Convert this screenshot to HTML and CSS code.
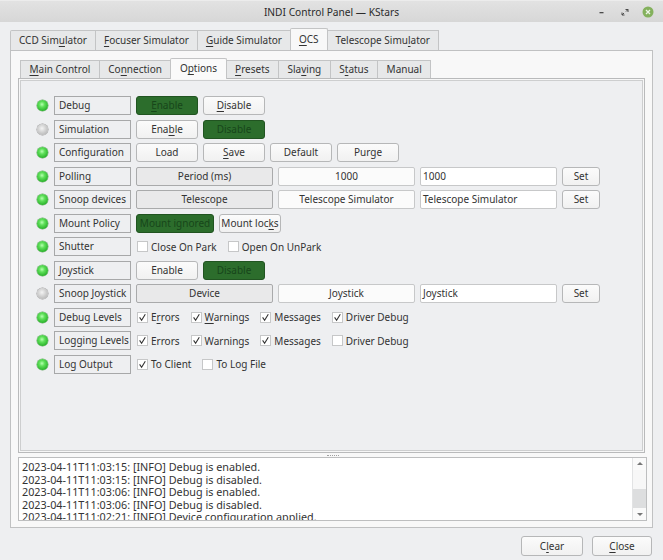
FILE: index.html
```html
<!DOCTYPE html>
<html>
<head>
<meta charset="utf-8">
<title>INDI Control Panel — KStars</title>
<link rel="stylesheet" href="styles.css">
</head>
<body>
<div class="titlebar">
  <div class="title">INDI Control Panel — KStars</div>
  <div class="wctl">
    <svg class="wmin" width="8" height="8" viewBox="0 0 8 8"><rect x="1.5" y="4" width="4" height="1.3" fill="#4a4a4a"/></svg>
    <svg class="wmax" width="8" height="8" viewBox="0 0 8 8"><path d="M4.5 1.5H7V4M7 1.5L5 3.5M3.5 7H1V4.5M1 7L3 5" stroke="#4a4a4a" stroke-width="1" fill="none"/></svg>
    <svg class="wclose" width="12" height="12" viewBox="0 0 12 12"><circle cx="6" cy="6" r="5.5" fill="#84b15d"/><path d="M4 4L8 8M8 4L4 8" stroke="#eef5e8" stroke-width="1.3"/></svg>
  </div>
</div>

<div class="content">
  <div class="tabbar outer-tabs">
    <div class="tab">CCD Sim<u>u</u>lator</div>
    <div class="tab"><u>F</u>ocuser Simulator</div>
    <div class="tab"><u>G</u>uide Simulator</div>
    <div class="tab sel"><u>O</u>CS</div>
    <div class="tab">Telescope Simu<u>l</u>ator</div>
  </div>
  <div class="outer-pane">
    <div class="tabbar inner-tabs">
      <div class="tab"><u>M</u>ain Control</div>
      <div class="tab">Co<u>n</u>nection</div>
      <div class="tab sel">O<u>p</u>tions</div>
      <div class="tab"><u>P</u>resets</div>
      <div class="tab">Sla<u>v</u>ing</div>
      <div class="tab">S<u>t</u>atus</div>
      <div class="tab">Manual</div>
    </div>
    <div class="inner-pane">
      <div class="rows">
        <div class="row">
          <span class="led on"></span><span class="plabel">Debug</span>
          <div class="ctrls"><span class="btn green"><u>E</u>nable</span><span class="btn"><u>D</u>isable</span></div>
        </div>
        <div class="row">
          <span class="led off"></span><span class="plabel">Simulation</span>
          <div class="ctrls"><span class="btn">Ena<u>b</u>le</span><span class="btn green">Disable</span></div>
        </div>
        <div class="row">
          <span class="led on"></span><span class="plabel">Configuration</span>
          <div class="ctrls"><span class="btn">Load</span><span class="btn"><u>S</u>ave</span><span class="btn">Default</span><span class="btn">Purge</span></div>
        </div>
        <div class="row">
          <span class="led on"></span><span class="plabel">Polling</span>
          <div class="ctrls"><span class="ro">Period (ms)</span><span class="val">1000</span><span class="input">1000</span><span class="btn set">Set</span></div>
        </div>
        <div class="row">
          <span class="led on"></span><span class="plabel">Snoop devices</span>
          <div class="ctrls"><span class="ro">Telescope</span><span class="val">Telescope Simulator</span><span class="input">Telescope Simulator</span><span class="btn set">Set</span></div>
        </div>
        <div class="row">
          <span class="led on"></span><span class="plabel">Mount Policy</span>
          <div class="ctrls"><span class="btn green wide">Mount ignored</span><span class="btn">Mount loc<u>k</u>s</span></div>
        </div>
        <div class="row">
          <span class="led on"></span><span class="plabel">Shutter</span>
          <div class="ctrls checks">
            <span class="chk"><span class="box"></span><span class="ct">Close On Park</span></span>
            <span class="chk"><span class="box"></span><span class="ct">Open On UnPark</span></span>
          </div>
        </div>
        <div class="row">
          <span class="led on"></span><span class="plabel">Joystick</span>
          <div class="ctrls"><span class="btn">Enable</span><span class="btn green">Disable</span></div>
        </div>
        <div class="row">
          <span class="led off"></span><span class="plabel">Snoop Joystick</span>
          <div class="ctrls"><span class="ro">Device</span><span class="val">Joystick</span><span class="input">Joystick</span><span class="btn set">Set</span></div>
        </div>
        <div class="row">
          <span class="led on"></span><span class="plabel">Debug Levels</span>
          <div class="ctrls checks">
            <span class="chk"><span class="box"><svg viewBox="0 0 11 11"><path d="M2.6 5.4L4.6 8.3L8.3 2.2"/></svg></span><span class="ct">E<u>r</u>rors</span></span>
            <span class="chk"><span class="box"><svg viewBox="0 0 11 11"><path d="M2.6 5.4L4.6 8.3L8.3 2.2"/></svg></span><span class="ct"><u>W</u>arnings</span></span>
            <span class="chk"><span class="box"><svg viewBox="0 0 11 11"><path d="M2.6 5.4L4.6 8.3L8.3 2.2"/></svg></span><span class="ct">Messages</span></span>
            <span class="chk"><span class="box"><svg viewBox="0 0 11 11"><path d="M2.6 5.4L4.6 8.3L8.3 2.2"/></svg></span><span class="ct">Driver Debug</span></span>
          </div>
        </div>
        <div class="row">
          <span class="led on"></span><span class="plabel">Logging Levels</span>
          <div class="ctrls checks">
            <span class="chk"><span class="box"><svg viewBox="0 0 11 11"><path d="M2.6 5.4L4.6 8.3L8.3 2.2"/></svg></span><span class="ct">Errors</span></span>
            <span class="chk"><span class="box"><svg viewBox="0 0 11 11"><path d="M2.6 5.4L4.6 8.3L8.3 2.2"/></svg></span><span class="ct">Warnings</span></span>
            <span class="chk"><span class="box"><svg viewBox="0 0 11 11"><path d="M2.6 5.4L4.6 8.3L8.3 2.2"/></svg></span><span class="ct">Messages</span></span>
            <span class="chk"><span class="box"></span><span class="ct">Driver Debug</span></span>
          </div>
        </div>
        <div class="row">
          <span class="led on"></span><span class="plabel">Log Output</span>
          <div class="ctrls checks">
            <span class="chk"><span class="box"><svg viewBox="0 0 11 11"><path d="M2.6 5.4L4.6 8.3L8.3 2.2"/></svg></span><span class="ct">To Client</span></span>
            <span class="chk"><span class="box"></span><span class="ct">To Log File</span></span>
          </div>
        </div>
      </div>
    </div>
    <div class="splitter"><span class="grip"></span></div>
    <div class="log">
      <div class="log-text">
        <div class="line">2023-04-11T11:03:15: [INFO] Debug is enabled.</div>
        <div class="line">2023-04-11T11:03:15: [INFO] Debug is disabled.</div>
        <div class="line">2023-04-11T11:03:06: [INFO] Debug is enabled.</div>
        <div class="line">2023-04-11T11:03:06: [INFO] Debug is disabled.</div>
        <div class="line">2023-04-11T11:02:21: [INFO] Device configuration applied.</div>
      </div>
      <div class="vscroll">
        <span class="arrow up"></span>
        <span class="track"><span class="thumb"></span></span>
        <span class="arrow down"></span>
      </div>
    </div>
  </div>
  <div class="footer">
    <span class="btn fbtn">C<u>l</u>ear</span>
    <span class="btn fbtn close"><u>C</u>lose</span>
  </div>
</div>
</body>
</html>
```

FILE: styles.css
```css
* { box-sizing: border-box; }
html, body { margin: 0; padding: 0; }
body {
  width: 663px;
  height: 560px;
  overflow: hidden;
  background: #eeeff1;
  font-family: "Noto Sans", "DejaVu Sans", sans-serif;
  font-size: 10px;
  color: #333;
}
u { text-decoration-thickness: 1px; text-underline-offset: 1.5px; }

/* title bar */
.titlebar {
  height: 22px;
  display: grid;
  grid-template-columns: 1fr auto 1fr;
  align-items: center;
  background: linear-gradient(#e2e2e2, #d7d7d7);
  border-top: 1px solid #ececec;
}
.title { grid-column: 2; color: #2b2b2b; font-size: 10.2px; }
.wctl {
  grid-column: 3;
  justify-self: end;
  display: flex;
  align-items: center;
  padding-right: 9px;
}
.wctl svg { display: block; }
.wmin { margin-right: 15px; }
.wmax { margin-right: 13px; }

/* content */
.content { padding: 6px 10px 0 10px; }

.tabbar { display: flex; align-items: flex-end; }
.tab {
  height: 20px;
  line-height: 19px;
  padding: 0 8px;
  background: #e7e8e9;
  border: 1px solid #c3c4c5;
  border-bottom: none;
  margin-right: -1px;
  color: #333;
  white-space: nowrap;
}
.tab.sel {
  height: 22px;
  line-height: 20px;
  background: #f8f8f8;
  position: relative;
  z-index: 1;
  border-radius: 2px 2px 0 0;
}
.outer-tabs { height: 22px; }
.outer-tabs .tab:first-child { border-radius: 2px 0 0 0; }

.outer-pane {
  height: 478px;
  background: #f8f8f8;
  border: 1px solid #c0c1c2;
  padding: 7px 5px 6px 7px;
  display: flex;
  flex-direction: column;
}
.inner-tabs { height: 20px; margin-left: 2px; }
.inner-tabs .tab { height: 18px; line-height: 17px; padding: 0 8.5px; }
.inner-tabs .tab.sel { height: 21px; line-height: 19px; margin-bottom: -1px; background: #fafafa; }

.inner-pane {
  height: 375px;
  margin-right: 2px;
  background: #eeeff1;
  border: 1px solid #b9babb;
  box-shadow: inset 0 0 0 1px #f7f7f7, inset 0 0 0 2px #cdcecf;
  padding: 17px 0 0 18px;
}
.rows { display: flex; flex-direction: column; gap: 4.5px; }
.row { display: flex; align-items: center; height: 19px; }

.led {
  width: 11px;
  height: 11px;
  border-radius: 50%;
  margin-right: 6px;
  flex: none;
}
.led.on {
  background: radial-gradient(circle at 45% 40%, #b6ffb0 0, #5fe05a 30%, #2fb52f 70%, #1f8f22 100%);
  box-shadow: 0 0 0 0.5px #6aa86a;
}
.led.off {
  background: radial-gradient(circle at 45% 40%, #f4f4f4 0, #d0d0d0 45%, #a9a9a9 100%);
  box-shadow: 0 0 0 0.5px #9a9a9a;
}
.plabel {
  width: 77px;
  height: 19px;
  line-height: 17px;
  flex: none;
  border: 1px solid #a7a8a9;
  background: #eeeff1;
  padding-left: 4px;
  white-space: nowrap;
  margin-right: 5px;
}

.ctrls { display: flex; align-items: center; gap: 5px; }
.btn {
  display: block;
  width: 62px;
  height: 19px;
  line-height: 17px;
  text-align: center;
  border: 1px solid #b6b7b8;
  border-radius: 3px;
  background: linear-gradient(#fbfbfb, #f1f1f1);
  color: #333;
  white-space: nowrap;
}
.btn.green {
  background: #2c6d2c;
  border-color: #215421;
  color: #17461a;
}
.btn.wide { width: 78px; }
.btn.set { width: 38px; }
.ro, .val, .input {
  display: block;
  width: 137px;
  height: 19px;
  line-height: 17px;
  white-space: nowrap;
  border-radius: 2px;
}
.ro {
  text-align: center;
  background: #e9e9ea;
  border: 1px solid #a9aaab;
}
.val {
  text-align: center;
  background: #fbfbfb;
  border: 1px solid #c7c8c9;
}
.input {
  padding-left: 2px;
  background: #fff;
  border: 1px solid #c7c8c9;
}

.checks { gap: 11px; padding-left: 1px; }
.chk { display: flex; align-items: center; gap: 3px; white-space: nowrap; }
.box {
  width: 11px;
  height: 11px;
  background: #fff;
  border: 1px solid #c6c7c8;
  display: flex;
  align-items: center;
  justify-content: center;
}
.box svg { width: 11px; height: 11px; flex: none; }
.box path { fill: none; stroke: #333; stroke-width: 1.1; }

.splitter { height: 4px; display: flex; justify-content: center; align-items: center; }
.grip { width: 12px; height: 1px; border-top: 1px dotted #a0a0a0; }

.log {
  height: 64px;
  background: #fff;
  border: 1px solid #bdbebf;
  display: flex;
  overflow: hidden;
}
.log-text {
  flex: 1;
  padding: 2px 0 0 3px;
  font-size: 10.8px;
  color: #333;
  overflow: hidden;
  white-space: nowrap;
}
.line { height: 12.5px; line-height: 14px; }
.vscroll {
  width: 14px;
  flex: none;
  display: flex;
  flex-direction: column;
  border-left: 1px solid #e2e3e4;
  background: #fafafa;
}
.arrow { height: 12px; position: relative; }
.arrow::after {
  content: "";
  position: absolute;
  left: 3.5px;
  border-left: 3px solid transparent;
  border-right: 3px solid transparent;
}
.arrow.up::after { top: 4px; border-bottom: 3px solid #777; }
.arrow.down::after { top: 5px; border-top: 3px solid #777; }
.track { flex: 1; display: flex; flex-direction: column; justify-content: flex-end; background: #f7f7f7; }
.thumb { height: 19px; background: #dddedf; }

.footer {
  display: flex;
  justify-content: flex-end;
  gap: 9px;
  margin-top: 8px;
  padding-right: 1px;
}
.fbtn { width: 62px; height: 20px; line-height: 18px; }
.fbtn.close { width: 60px; }
```
